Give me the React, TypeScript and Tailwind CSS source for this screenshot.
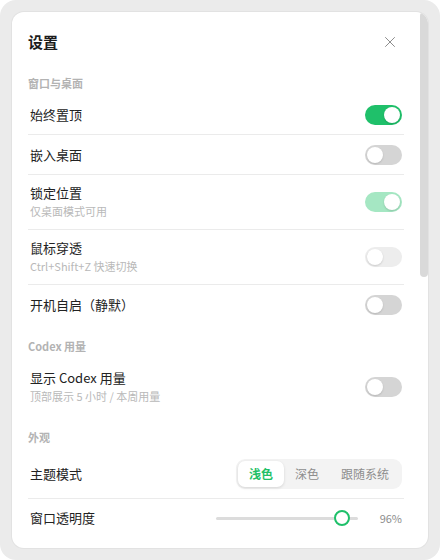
import { X } from "lucide-react"

type ToggleKind = "on" | "onDim" | "off" | "offDim"

const Toggle = ({ kind }: { kind: ToggleKind }) => {
    const track =
        kind === "on" ? "bg-[#1fc06a]" :
        kind === "onDim" ? "bg-[#a5e7c3]" :
        kind === "off" ? "bg-[#d5d5d5]" : "bg-[#ededed]"
    const isOn = kind === "on" || kind === "onDim"
    return (
        <div className={`relative h-5 w-[37px] shrink-0 rounded-full ${track}`}>
            <div className={`absolute top-[2px] h-4 w-4 rounded-full bg-white shadow-[0_1px_2px_rgba(0,0,0,0.15)] ${isOn ? "right-[2px]" : "left-[2px]"}`} />
        </div>
    )
}

const Row = ({ title, sub, toggle, last }: { title: string; sub?: string; toggle: ToggleKind; last?: boolean }) => (
    <div className={`flex items-center justify-between px-0.5 ${sub ? "py-[9px]" : last ? "h-[39px]" : "h-10"} ${last ? "" : "border-b border-[#ebebeb]"}`}>
        <div>
            <div className="text-[13px] leading-[18px] text-[#222]">{title}</div>
            {sub && <div className="text-[11px] leading-[18px] text-[#b9b9b9]">{sub}</div>}
        </div>
        <Toggle kind={toggle} />
    </div>
)

const Label = ({ text }: { text: string }) => (
    <div className="text-[11px] font-semibold leading-4 text-[#b3b3b3]">{text}</div>
)

export default function App() {
    return (
        <div className="h-[560px] w-[440px] bg-white" style={{ fontFamily: '"Noto Sans CJK SC", "Noto Sans", sans-serif' }}>
            <div className="h-full w-full rounded-[16px] bg-[#ebebeb] p-3">
                <div className="relative h-full overflow-hidden rounded-[12px] bg-white ring-1 ring-[#e2e2e2]">
                    <div className="pl-4 pr-6 pt-5">
                        <div className="flex h-5 items-center justify-between">
                            <div className="text-[15px] font-bold leading-5 text-[#1c1c1c]">设置</div>
                            <div className="-my-1 flex h-7 w-7 items-center justify-center text-[#8a8a8a]">
                                <X size={18} strokeWidth={1.3} />
                            </div>
                        </div>

                        <div className="mt-[23px]">
                            <Label text="窗口与桌面" />
                            <div className="mt-1">
                                <Row title="始终置顶" toggle="on" />
                                <Row title="嵌入桌面" toggle="off" />
                                <Row title="锁定位置" sub="仅桌面模式可用" toggle="onDim" />
                                <Row title="鼠标穿透" sub="Ctrl+Shift+Z 快速切换" toggle="offDim" />
                                <Row title="开机自启（静默）" toggle="off" last />
                            </div>
                        </div>

                        <div className="mt-[14px]">
                            <Label text="Codex 用量" />
                            <div className="mt-[6px]">
                                <Row title="显示 Codex 用量" sub="顶部展示 5 小时 / 本周用量" toggle="off" last />
                            </div>
                        </div>

                        <div className="mt-[15px]">
                            <Label text="外观" />
                            <div className="mt-[5px]">
                                <div className="flex items-center justify-between border-b border-[#ebebeb] px-0.5 py-[9px]">
                                    <div className="text-[13px] leading-[18px] text-[#222]">主题模式</div>
                                    <div className="flex h-[30px] items-center rounded-[9px] bg-[#f3f3f3] p-[2px]">
                                        <div className="flex h-[26px] items-center rounded-[7px] bg-white px-[11px] text-[12px] font-semibold text-[#1fbf66] shadow-[0_1px_3px_rgba(0,0,0,0.13)]">浅色</div>
                                        <div className="flex h-[26px] items-center px-[11px] text-[12px] text-[#8e8e8e]">深色</div>
                                        <div className="flex h-[26px] items-center px-[11px] text-[12px] text-[#8e8e8e]">跟随系统</div>
                                    </div>
                                </div>
                                <div className="flex h-[38px] items-center justify-between px-0.5">
                                    <div className="text-[13px] leading-[18px] text-[#222]">窗口透明度</div>
                                    <div className="flex items-center">
                                        <div className="relative h-[3px] w-[142px] rounded-full bg-[#dcdcdc]">
                                            <div className="absolute left-[118px] top-1/2 h-4 w-4 -translate-y-1/2 rounded-full border-2 border-[#1fc06a] bg-white" />
                                        </div>
                                        <div className="w-[44px] text-right text-[11px] text-[#8c8c8c]">96%</div>
                                    </div>
                                </div>
                            </div>
                        </div>
                    </div>
                    <div className="absolute right-0 top-0 h-[265px] w-2 rounded-full bg-[#d9d9d9]" />
                </div>
            </div>
        </div>
    )
}
